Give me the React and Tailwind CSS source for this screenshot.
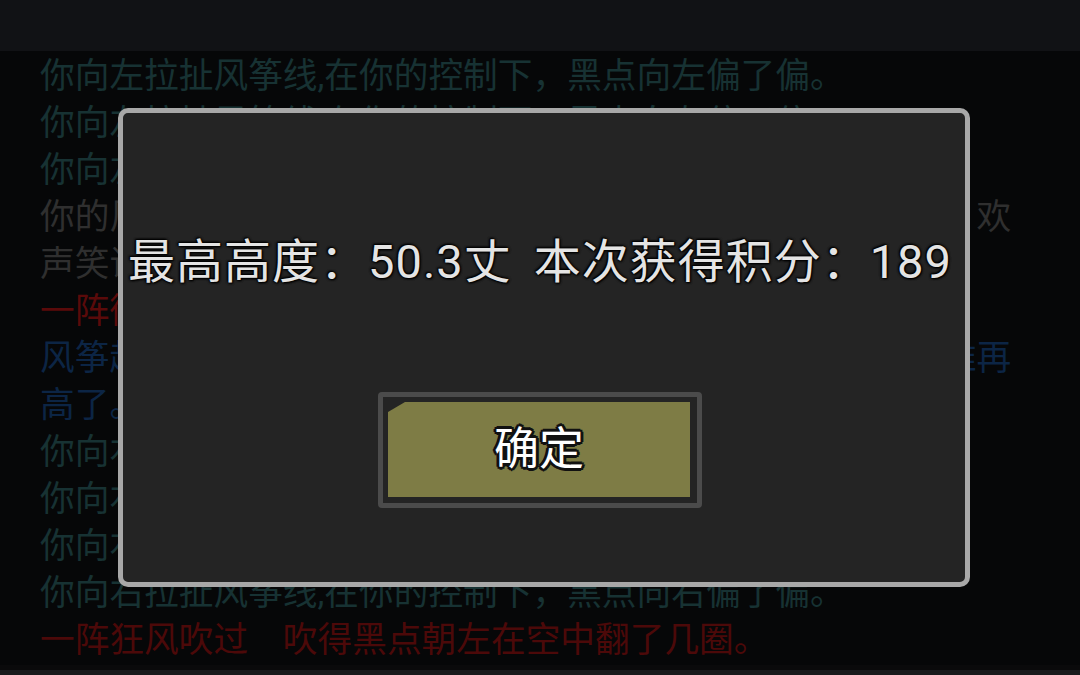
import React from "react";

const lines = [
  { t: "你向左拉扯风筝线,在你的控制下，黑点向左偏了偏。", c: "text-[#173233]" },
  { t: "你向左拉扯风筝线,在你的控制下，黑点向左偏了偏。", c: "text-[#173233]" },
  { t: "你向左拉扯风筝线,在你的控制下，黑点向左偏了偏。", c: "text-[#173233]" },
  { t: "你的风筝在蓝天中越飞越高，远处围观的孩子们都纷纷鼓掌，欢", c: "text-[#2f2f2f]" },
  { t: "声笑语不断。", c: "text-[#2f2f2f]" },
  { t: "一阵微风拂过，风筝又向上升高了一些。", c: "text-[#5a0a0a]" },
  { t: "风筝越飞越高，已经快要消失在云层里了，看起来它已经很难再", c: "text-[#0c2545]" },
  { t: "高了。", c: "text-[#0c2545]" },
  { t: "你向右拉扯风筝线,在你的控制下，黑点向右偏了偏。", c: "text-[#173233]" },
  { t: "你向右拉扯风筝线,在你的控制下，黑点向右偏了偏。", c: "text-[#173233]" },
  { t: "你向右拉扯风筝线,在你的控制下，黑点向右偏了偏。", c: "text-[#173233]" },
  { t: "你向右拉扯风筝线,在你的控制下，黑点向右偏了偏。", c: "text-[#173233]" },
  { t: "一阵狂风吹过　吹得黑点朝左在空中翻了几圈。", c: "text-[#4c0909]" },
];

export default function App() {
  return (
    <div className="relative w-[1080px] h-[675px] overflow-hidden bg-[#060708] flex flex-col font-[Roboto,'Noto_Sans_CJK_SC',sans-serif]">
      <div className="h-[51px] shrink-0 bg-[#111215]" />
      <div className="flex-1 pt-[2px] pl-[40px] text-[34.7px] leading-[47px]">
        {lines.map((l, i) => (
          <div key={i} className={`whitespace-nowrap ${l.c}`}>
            {l.t}
          </div>
        ))}
      </div>
      <div className="h-[5px] shrink-0 bg-[#0a0a0b]" />
      <div className="h-[5px] shrink-0 bg-[#19191b]" />

      <div className="absolute left-[118px] top-[108px] w-[852px] h-[479px] border-[5px] border-[#a8a8a8] rounded-[10px] bg-[#242424] flex flex-col items-center pt-[121px] pr-[8px]">
        <div className="h-[56px] leading-[56px] text-[47px] tracking-[1px] text-[#e4e4e4] whitespace-nowrap [text-shadow:0_0_3px_#000,0_0_3px_#000,1px_1px_2px_#000,-1px_-1px_2px_#000]">
          最高高度：50.3丈<span className="inline-block w-[22px]" />本次获得积分：189
        </div>
        <button className="mt-[102px] w-[324px] h-[116px] border-[5px] border-[#4b4b4b] rounded-[4px] bg-[#242424] pt-[5px] pl-[5px] pr-[7px] pb-[6px] flex">
          <div className="flex-1 bg-[#7e7c45] [clip-path:polygon(0_10px,17px_0,100%_0,100%_100%,0_100%)] flex items-center justify-center">
            <span className="text-[45px] leading-none font-normal text-white [text-shadow:3px_0_0_#111,-3px_0_0_#111,0_3px_0_#111,0_-3px_0_#111,2px_2px_0_#111,-2px_-2px_0_#111,2px_-2px_0_#111,-2px_2px_0_#111]">
              确定
            </span>
          </div>
        </button>
      </div>
    </div>
  );
}
